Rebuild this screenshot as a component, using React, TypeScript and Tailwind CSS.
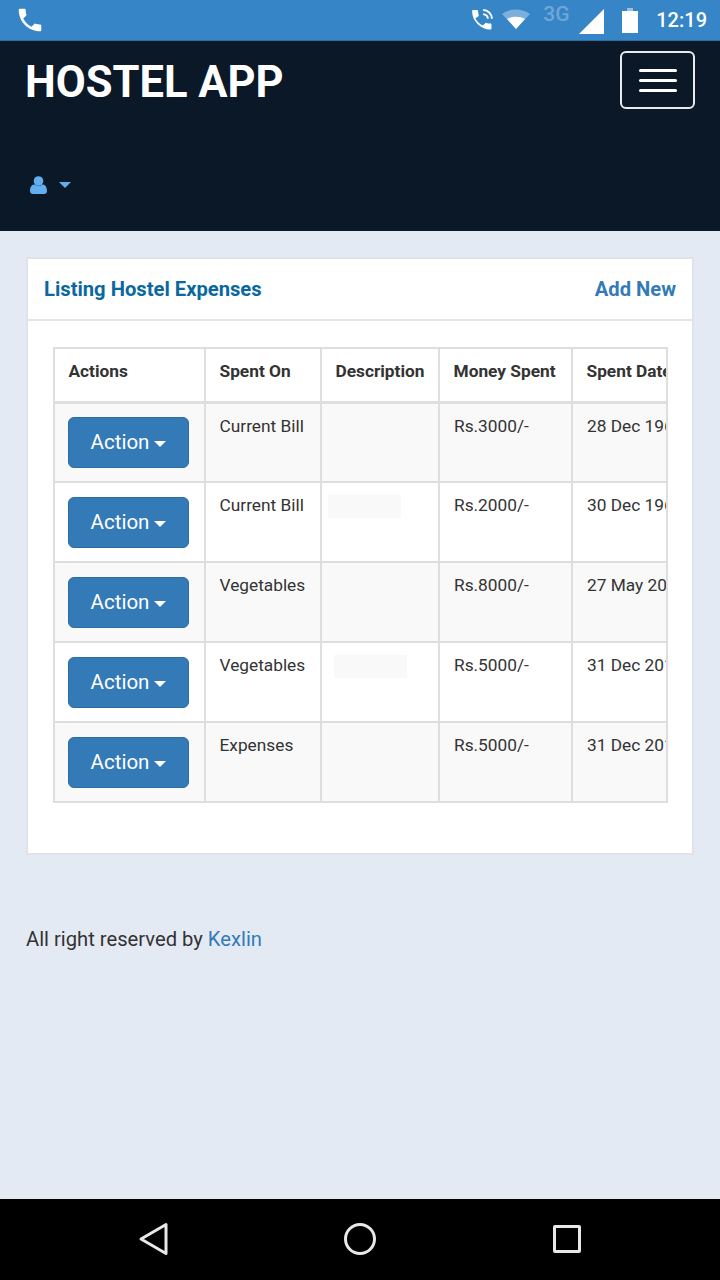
const rows = [
  { on: 'Current Bill', money: 'Rs.3000/-', date: '28 Dec 1960', patch: '' },
  { on: 'Current Bill', money: 'Rs.2000/-', date: '30 Dec 1960', patch: 'ml-[6px]' },
  { on: 'Vegetables', money: 'Rs.8000/-', date: '27 May 2017', patch: '' },
  { on: 'Vegetables', money: 'Rs.5000/-', date: '31 Dec 2017', patch: 'ml-3' },
  { on: 'Expenses', money: 'Rs.5000/-', date: '31 Dec 2017', patch: '' },
];

function Caret({ className = '' }: { className?: string }) {
  return (
    <svg viewBox="0 0 12 6" className={className} fill="currentColor">
      <path d="M0 0h12L6 6z" />
    </svg>
  );
}

function StatusBar() {
  return (
    <div className="h-[41px] bg-[#3685c6] border-b border-[#2f6f9f] flex items-center text-white shrink-0">
      <svg viewBox="0 0 24 24" className="w-[30px] h-[30px] ml-[15px]" fill="currentColor">
        <path d="M6.6 10.8c1.4 2.8 3.8 5.1 6.6 6.6l2.2-2.2c.3-.3.7-.4 1-.2 1.1.4 2.3.6 3.6.6.6 0 1 .4 1 1V20c0 .6-.4 1-1 1C10.6 21 3 13.400 3 4c0-.6.4-1 1-1h3.500c.6 0 1 .4 1 1 0 1.300.2 2.500.6 3.600.1.300 0 .7-.2 1z" />
      </svg>
      <div className="ml-auto flex items-center">
        <svg viewBox="0 0 24 24" className="w-[28px] h-[28px]" fill="none">
          <path fill="#fff" d="M6.300 10.400c1.400 2.800 3.600 5 6.400 6.400l2.100-2.100c.3-.3.7-.4 1-.2 1 .4 2.200.6 3.400.6.500 0 .9.400.9.900v3.300c0 .5-.4.900-.9.900C10.700 20.200 3.500 13 3.500 4.300c0-.5.4-.9.900-.9h3.300c.5 0 .9.400.9.900 0 1.200.2 2.400.6 3.400.1.300 0 .7-.2 1z" />
          <path stroke="#fff" strokeWidth="1.700" d="M13 3.500a7.500 7.500 0 0 1 7.500 7.500M13 7a4 4 0 0 1 4 4" />
        </svg>
        <svg viewBox="0 0 30 24" className="w-[30px] h-[24px] ml-[5px]">
          <path fill="#fff" fillOpacity="0.35" d="M15 21 1 6c8-6 20-6 28 0z" />
          <path fill="#fff" d="M15 21 6 11c5-3 13-3 18 0z" />
        </svg>
        <span className="ml-[12px] mb-[12px] w-[31px] text-[21px] leading-none font-medium text-white/30">3G</span>
        <svg viewBox="0 0 25 25" className="w-[25px] h-[25px] ml-[5px] mt-[2px]">
          <path fill="#fff" d="M25 0v25H0z" />
        </svg>
        <svg viewBox="0 0 16 25" className="w-4 h-[25px] ml-[18px] mt-[1px]">
          <path fill="#fff" fillOpacity="0.5" d="M5 0h6v3H5z" />
          <path fill="#fff" d="M0 3h16v22H0z" />
        </svg>
        <span className="ml-[18px] mr-[13px] text-[20px] leading-none font-medium">12:19</span>
      </div>
    </div>
  );
}

function Header() {
  return (
    <header className="h-[190px] bg-[#0a1828] shrink-0 pl-[25px] pr-[26px] pt-[10px] flex flex-col">
      <div className="flex items-start justify-between">
        <h1 className="text-[43.500px] leading-[60px] pt-[2px] font-bold text-white">HOSTEL APP</h1>
        <button className="w-[75px] h-[58px] -mr-[1px] border-2 border-[#e8eaec] rounded-md flex flex-col items-center justify-center gap-[7px]">
          <span className="w-[38px] h-[3px] bg-white rounded-sm" />
          <span className="w-[38px] h-[3px] bg-white rounded-sm" />
          <span className="w-[38px] h-[3px] bg-white rounded-sm" />
        </button>
      </div>
      <div className="mt-[63px] ml-[5px] flex items-center text-[#63aeee]">
        <svg viewBox="0 0 17 18" className="w-[17px] h-[18px]" fill="currentColor">
          <circle cx="8.500" cy="5" r="4.800" />
          <path d="M0 15c0-5 2.500-6.500 4.500-6.500 1 .8 2.500 1.300 4 1.300s3-.5 4-1.300c2 0 4.500 1.500 4.500 6.500 0 2-1.300 3-3 3H3c-1.700 0-3-1-3-3z" />
        </svg>
        <Caret className="w-3 h-[6px] ml-[12px]" />
      </div>
    </header>
  );
}

function ExpenseTable() {
  return (
    <div className="w-[615px] overflow-hidden border-r-2 border-[#dedede]">
      <table className="w-[760px] table-fixed border-collapse text-[17.300px] text-[#333]">
        <colgroup>
          <col className="w-[151px]" />
          <col className="w-[116px]" />
          <col className="w-[118px]" />
          <col className="w-[133px]" />
          <col className="w-[242px]" />
        </colgroup>
        <thead>
          <tr className="h-[54px] font-bold">
            {['Actions', 'Spent On', 'Description', 'Money Spent', 'Spent Date'].map((h) => (
              <th key={h} className="border-2 border-b-[3px] border-[#dedede] pl-[13.500px] pr-2 text-left align-middle font-bold whitespace-nowrap pb-[6px]">
                {h}
              </th>
            ))}
          </tr>
        </thead>
        <tbody>
          {rows.map((r, i) => (
            <tr key={i} className={`h-[80px] ${i % 2 === 0 ? 'bg-[#f9f9f9]' : 'bg-white'}`}>
              <td className="border-2 border-[#dedede] pl-[13px] pr-0 align-middle">
                <button className="w-[121px] h-[51px] bg-[#337ab7] border border-[#2e6da4] rounded-md text-white text-[20.500px] flex items-center justify-center">
                  Action
                  <Caret className="w-3 h-[6px] ml-[5px] mt-[3px]" />
                </button>
              </td>
              <td className="border-2 border-[#dedede] pl-[13.500px] pr-2 pt-[10px] align-top whitespace-nowrap">{r.on}</td>
              <td className="border-2 border-[#dedede] p-0 align-top">
                {r.patch && <div className={`${r.patch} w-[73px] h-[23px] mt-[12px] bg-[#f9f9f9]`} />}
              </td>
              <td className="border-2 border-[#dedede] px-[14px] pt-[10px] align-top whitespace-nowrap">{r.money}</td>
              <td className="border-2 border-[#dedede] px-[14px] pt-[10px] align-top whitespace-nowrap">{r.date}</td>
            </tr>
          ))}
        </tbody>
      </table>
    </div>
  );
}

export default function App() {
  return (
    <div className="w-[720px] h-[1280px] flex flex-col bg-[#e4eaf3] font-['Roboto',sans-serif] overflow-hidden">
      <StatusBar />
      <Header />
      <main className="flex-1 px-[26px] pt-[26px]">
        <section className="h-[598px] bg-white border-2 border-[#dfe3e8]">
          <div className="h-[62px] border-b-2 border-[#e2e4e6] pl-4 pr-4 flex items-center justify-between">
            <h2 className="text-[20.200px] font-bold text-[#0a689f]">Listing Hostel Expenses</h2>
            <a className="text-[20.200px] font-bold text-[#337ab7]">Add New</a>
          </div>
          <div className="pl-[25px] pt-[26px]">
            <ExpenseTable />
          </div>
        </section>
        <p className="mt-[69px] text-[20.200px] text-[#333]">
          All right reserved by <a className="text-[#337ab7]">Kexlin</a>
        </p>
      </main>
      <nav className="h-[81px] pb-[2px] bg-black shrink-0 flex items-center text-[#e8e8e8]">
        <svg viewBox="0 0 32 34" className="w-8 h-[34px] ml-[138px]" fill="none" stroke="currentColor" strokeWidth="3" strokeLinejoin="round">
          <path d="M28 2.500v29L3 17z" />
        </svg>
        <svg viewBox="0 0 32 32" className="w-8 h-8 ml-[174px]" fill="none" stroke="currentColor" strokeWidth="3">
          <circle cx="16" cy="16" r="14.500" />
        </svg>
        <div className="w-[28px] h-[28px] ml-[177px] border-[3px] border-[#e8e8e8] rounded-[2px]" />
      </nav>
    </div>
  );
}
